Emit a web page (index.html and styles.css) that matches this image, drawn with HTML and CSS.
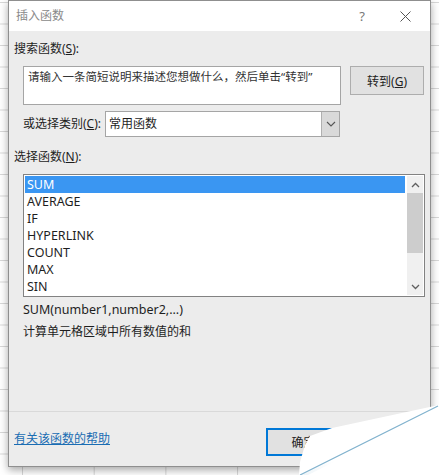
FILE: index.html
```html
<!DOCTYPE html>
<html lang="zh-CN">
<head>
  <meta charset="UTF-8">
  <meta name="viewport" content="width=device-width, initial-scale=1.0">
  <title>插入函数</title>
  <link rel="stylesheet" href="styles.css">
</head>
<body>
  <div class="dialog">
    <div class="titlebar">
      <span class="title">插入函数</span>
      <span class="help">?</span>
      <span class="close">
        <svg width="11" height="11" viewBox="0 0 11 11"><path d="M0.5 0.5L10.5 10.5M10.5 0.5L0.5 10.5" stroke="#555" stroke-width="1" fill="none"/></svg>
      </span>
    </div>

    <div class="content">
      <div class="label search-label">搜索函数(<u>S</u>):</div>
      <div class="search-row">
        <div class="search-box">请输入一条简短说明来描述您想做什么，然后单击“转到”</div>
        <button class="btn go-btn">转到(<u>G</u>)</button>
      </div>

      <div class="category-row">
        <span class="category-label">或选择类别(<u>C</u>):</span>
        <div class="select">
          <span class="select-value">常用函数</span>
          <span class="select-arrow">
            <svg width="10" height="6" viewBox="0 0 10 6"><path d="M1 1L5 5L9 1" stroke="#555" stroke-width="1.1" fill="none"/></svg>
          </span>
        </div>
      </div>

      <div class="label list-label">选择函数(<u>N</u>):</div>
      <div class="listbox">
        <ul class="items">
          <li class="selected">SUM</li>
          <li>AVERAGE</li>
          <li>IF</li>
          <li>HYPERLINK</li>
          <li>COUNT</li>
          <li>MAX</li>
          <li>SIN</li>
        </ul>
        <div class="scrollbar">
          <span class="arrow">
            <svg width="9" height="6" viewBox="0 0 9 6"><path d="M1 5L4.5 1.5L8 5" stroke="#606060" stroke-width="1.3" fill="none"/></svg>
          </span>
          <span class="thumb"></span>
          <span class="track"></span>
          <span class="arrow">
            <svg width="9" height="6" viewBox="0 0 9 6"><path d="M1 1L4.5 4.5L8 1" stroke="#606060" stroke-width="1.3" fill="none"/></svg>
          </span>
        </div>
      </div>

      <div class="syntax">SUM(number1,number2,...)</div>
      <div class="desc">计算单元格区域中所有数值的和</div>
    </div>

    <div class="footer">
      <a class="help-link" href="#">有关该函数的帮助</a>
      <button class="btn ok-btn">确定</button>
      <button class="btn cancel-btn">取消</button>
    </div>
  </div>

  <!-- curled page corner lying over the dialog -->
  <svg class="page-curl" width="141" height="80" viewBox="0 0 141 80">
    <defs>
      <linearGradient id="fold" x1="0" y1="1" x2="0.3" y2="0">
        <stop offset="0" stop-color="#e4eef4"/>
        <stop offset="0.25" stop-color="#ffffff"/>
      </linearGradient>
    </defs>
    <polygon points="1,80 2,67 7,50 12,41 34,33 141,10 141,80" fill="#fff"/>
    <polygon points="2,80 141,10 141,14 10,80" fill="url(#fold)" opacity="0.6"/>
    <path d="M2 80L140 11" stroke="#7fb1cd" stroke-width="1.2" fill="none"/>
  </svg>
</body>
</html>
```

FILE: styles.css
```css
body {
  margin: 0;
  width: 439px;
  height: 475px;
  overflow: hidden;
  position: relative;
  background-color: #fff;
  background-image:
    linear-gradient(to right, #d8d8d8 1px, transparent 1px),
    linear-gradient(to bottom, #d8d8d8 1px, transparent 1px);
  background-size: 71.7px 21.5px;
  background-position: 22px 2px;
  font-family: "Noto Sans", "Noto Sans CJK SC", sans-serif;
  font-size: 12px;
  color: #1e1e1e;
}
.dialog {
  margin-left: 8px;
  width: 423px;
  height: 467px;
  box-sizing: border-box;
  border: 1px solid #8f8f8f;
  background-color: #ececec;
  display: flex;
  flex-direction: column;
  box-shadow: 0 3px 8px rgba(0,0,0,0.35);
}
.titlebar {
  height: 30px;
  background-color: #fff;
  display: flex;
  align-items: center;
  padding-left: 7px;
}
.title {
  flex: 1;
  color: #8a8a8a;
  line-height: 16px;
}
.help {
  width: 20px;
  margin-right: 11px;
  text-align: center;
  color: #777;
  font-size: 13px;
}
.close {
  width: 44px;
  margin-right: 3px;
  display: flex;
  justify-content: center;
}
.label {
  line-height: 16px;
  margin-left: 5px;
}
.search-label {
  margin-top: 10px;
}
.search-row {
  display: flex;
  align-items: flex-start;
  margin-top: 9px;
  padding-left: 14px;
}
.search-box {
  width: 318px;
  height: 39px;
  box-sizing: border-box;
  border: 1px solid #a5a5a5;
  background-color: #fff;
  padding: 2px 4px;
  font-size: 11.5px;
  line-height: 16px;
  color: #333;
}
.btn {
  font: inherit;
  color: #222;
  background-color: #e1e1e1;
  border: 1px solid #adadad;
  padding: 0;
  box-sizing: border-box;
}
.go-btn {
  margin-left: 9px;
  width: 74px;
  height: 29px;
}
.category-row {
  display: flex;
  align-items: center;
  margin-top: 6px;
  padding-left: 14px;
}
.category-label {
  width: 82px;
  line-height: 16px;
}
.select {
  width: 235px;
  height: 26px;
  box-sizing: border-box;
  border: 1px solid #a5a5a5;
  background-color: #fff;
  display: flex;
}
.select-value {
  flex: 1;
  padding-left: 3px;
  line-height: 24px;
}
.select-arrow {
  width: 17px;
  background-color: #d9d9d9;
  border-left: 1px solid #b0b0b0;
  display: flex;
  align-items: center;
  justify-content: center;
}
.list-label {
  margin-top: 12px;
}
.listbox {
  margin: 9px 0 0 14px;
  width: 402px;
  height: 123px;
  box-sizing: border-box;
  border: 1px solid #828282;
  background-color: #fff;
  padding: 1px;
  display: flex;
}
.items {
  list-style: none;
  margin: 0;
  padding: 0;
  width: 380px;
  font-size: 12.5px;
}
.items li {
  height: 17px;
  line-height: 17px;
  padding-left: 2px;
}
.items .selected {
  background-color: #3a96f2;
  color: #fff;
}
.scrollbar {
  margin-left: 2px;
  width: 16px;
  background-color: #f0f0f0;
  display: flex;
  flex-direction: column;
}
.arrow {
  height: 17px;
  display: flex;
  align-items: center;
  justify-content: center;
}
.thumb {
  height: 60px;
  background-color: #cdcdcd;
}
.track {
  flex: 1;
}
.syntax {
  margin: 5px 0 0 14px;
  line-height: 16px;
  font-size: 12.5px;
}
.desc {
  margin: 6px 0 0 14px;
  line-height: 16px;
}
.footer {
  margin-top: auto;
  height: 55px;
  box-sizing: border-box;
  border-top: 1px solid #d9d9d9;
  display: flex;
  align-items: flex-start;
  padding: 16px 6px 0 5px;
}
.help-link {
  margin-top: 3px;
  line-height: 16px;
  color: #1a6db3;
  text-decoration: underline;
}
.ok-btn {
  margin-left: auto;
  width: 75px;
  height: 28px;
  border: 2px solid #0078d7;
}
.cancel-btn {
  margin-left: 8px;
  width: 75px;
  height: 28px;
}
.page-curl {
  position: absolute;
  left: 298px;
  top: 395px;
}
```
